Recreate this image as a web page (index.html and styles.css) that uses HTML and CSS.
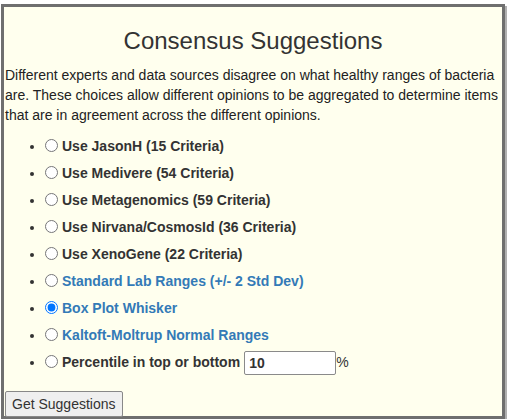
FILE: index.html
```html
<!DOCTYPE html>
<html>
<head>
<meta charset="utf-8">
<link rel="stylesheet" href="styles.css">
</head>
<body>
<div class="panel">
  <h2 class="title">Consensus Suggestions</h2>
  <p class="intro">Different experts and data sources disagree on what healthy ranges of bacteria are. These choices allow different opinions to be aggregated to determine items that are in agreement across the different opinions.</p>
  <ul class="choices">
    <li><label><input type="radio" name="c">Use JasonH (15 Criteria)</label></li>
    <li><label><input type="radio" name="c">Use Medivere (54 Criteria)</label></li>
    <li><label><input type="radio" name="c">Use Metagenomics (59 Criteria)</label></li>
    <li><label><input type="radio" name="c">Use Nirvana/CosmosId (36 Criteria)</label></li>
    <li><label><input type="radio" name="c">Use XenoGene (22 Criteria)</label></li>
    <li><label class="link"><input type="radio" name="c">Standard Lab Ranges (+/- 2 Std Dev)</label></li>
    <li><label class="link"><input type="radio" name="c" checked>Box Plot Whisker</label></li>
    <li><label class="link"><input type="radio" name="c">Kaltoft-Moltrup Normal Ranges</label></li>
    <li><label><input type="radio" name="c">Percentile in top or bottom</label><input class="pct" type="text" value="10"><span class="unit">%</span></li>
  </ul>
  <button class="go">Get Suggestions</button>
</div>
</body>
</html>
```
FILE: styles.css
```css
html, body {
  margin: 0;
  padding: 0;
  background: #ffffff;
  overflow: hidden;
}
body {
  font-family: "Liberation Sans", Arial, sans-serif;
  font-size: 14px;
  color: #333;
}
.panel {
  margin: 4px 0 0 1px;
  width: 496px;
  height: 409px;
  border: 3px solid #6f6f6f;
  box-shadow: 2px 2px 0 #b0b0b0;
  background: #ffffee;
  padding: 0 1px;
  box-sizing: content-box;
}
.title {
  margin: 20px 0 10px;
  font-size: 24px;
  font-weight: normal;
  text-align: center;
  line-height: 28px;
  color: #333;
}
.intro {
  margin: 0 0 8px;
  line-height: 20px;
  color: #222;
}
.choices {
  margin: 0 0 15px;
  padding-left: 40px;
}
.choices li {
  line-height: 27px;
}
.choices label {
  font-weight: bold;
  font-size: 14px;
  color: #333;
}
.choices label.link { color: #337ab7; }
.choices input[type=radio] {
  margin: 0 4px 0 0;
  width: 13px;
  height: 13px;
  vertical-align: -1px;
}
.pct {
  box-sizing: border-box;
  width: 92px;
  height: 24px;
  margin: 0 0 0 4px;
  padding: 1px 4px;
  border: 1px solid #8a8a8a;
  border-radius: 2px;
  font: bold 14px "Liberation Sans", Arial, sans-serif;
  color: #333;
  background: #fff;
  vertical-align: middle;
}
.unit {
  font-size: 14px;
}
.go {
  display: block;
  margin: 0;
  height: 26px;
  padding: 0 6px;
  font: 14px "Liberation Sans", Arial, sans-serif;
  color: #333;
  background: #efefef;
  border: 1px solid #888;
  border-radius: 2px;
}
```
